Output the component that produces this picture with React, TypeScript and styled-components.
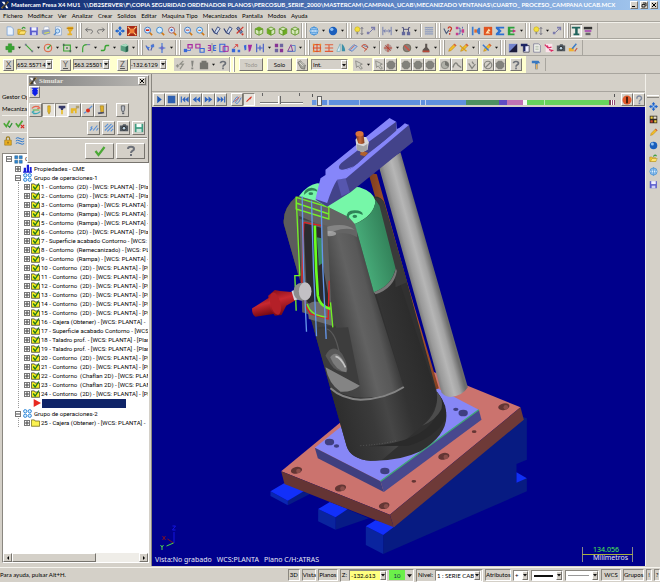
import React from 'react';
import styled, { createGlobalStyle, css } from 'styled-components';

const GlobalStyle = createGlobalStyle`
  * { box-sizing: border-box; }
  html, body, #root { margin: 0; height: 100%; }
  body { background: #d4d0c8; overflow: hidden; }
  body, button, input, select { font-family: Lato, Roboto, "Liberation Sans", sans-serif; font-size: 6px; color: #000; }
  button, input, select { margin: 0; padding: 0; border: 0; border-radius: 0; background: none; outline: 0; }
`;

const raised = css`
  border: 1px solid;
  border-color: #fff #77746e #77746e #fff;
`;
const sunken = css`
  border: 1px solid;
  border-color: #8a8780 #fff #fff #8a8780;
`;

/* ---------- icons, drawn on a 12 x 12 grid ---------- */

const stroke = (d: string, color: string, width = 1) => (
  <path d={d} fill="none" stroke={color} strokeWidth={width} />
);
const lens = (color: string, inner: React.ReactNode) => (
  <>
    <path d="M7.5 7.5 11 11" stroke="#d07818" strokeWidth="2" />
    <circle cx="5.5" cy="5" r="3.6" fill="#d5ecff" stroke={color} strokeWidth="1.2" />
    {inner}
  </>
);
const cube = (face: number) => (
  <>
    <path d="M1.5 3.5 6 1.2 10.5 3.5V8.800L6 11 1.500 8.800Z" fill="#d6e8bc" stroke="#5c9420" />
    {face === 0 && <path d="M1.500 3.500 6 1.200 10.500 3.500 6 5.500Z" fill="#6cab22" />}
    {face === 1 && <path d="M1.500 3.500 6 5.500V11L1.500 8.800Z" fill="#6cab22" />}
    {face === 2 && <path d="M10.500 3.500 6 5.500V11L10.500 8.800Z" fill="#6cab22" />}
    {stroke('M1.500 3.500 6 5.500 10.500 3.500M6 5.500V11', '#5c9420')}
  </>
);
const pencilShape = (
  <>
    <path d="M2 10 3 7 9 1 11 3 5 9Z" fill="#f2be28" stroke="#b07c10" strokeWidth=".6" />
    <path d="M9 1 11 3 10 4 8 2Z" fill="#d85048" />
  </>
);

const glyphs: Record<string, React.ReactNode> = {
  logo: (
    <>
      <path d="M1 1H5L8 6 11 11H8L5 6Z" fill="#fff" />
      <path d="M11 1 7 5M5 7 1 11" stroke="#e0b040" strokeWidth="2" />
      <path d="M8 1H11L5 11H1Z" fill="#222" opacity=".8" />
    </>
  ),
  page: <path d="M2.500 1H7.500L10 3.500V11H2.500Z" fill="#eaf4ff" stroke="#7da4d6" />,
  folder: (
    <>
      <path d="M1 4H4L5 5H9V10H1Z" fill="#f4c430" stroke="#a8871c" strokeWidth=".7" />
      <path d="M2 10 4 6H11L9 10Z" fill="#ffe36b" stroke="#a8871c" strokeWidth=".6" />
      {stroke('M6 3.500C7 1 9 1 10 3', '#3c9c3c', 1.5)}
    </>
  ),
  disk: (
    <>
      <path d="M1 1.500H10.500V11H1Z" fill="#5a5ccc" />
      <path d="M3 1.500H9V5.500H3Z" fill="#f3f3ff" />
      <path d="M3.500 7.500H8.500V11H3.500Z" fill="#cfd2f4" />
    </>
  ),
  printer: (
    <>
      <path d="M4 1H9L10 5H3Z" fill="#fff" stroke="#8899bb" strokeWidth=".6" />
      <path d="M1 5 9 4 11 6V9L4 11 1 9Z" fill="#8d9cc2" />
      <path d="M4 8 10 7V8L4 9.500Z" fill="#dce44c" />
    </>
  ),
  preview: (
    <>
      <path d="M3 1H8L10 3V11H3Z" fill="#f2f8ff" stroke="#7d9cc6" strokeWidth=".8" />
      <circle cx="5.500" cy="6" r="2.600" fill="#bfe0fa" stroke="#4c86c8" />
      {stroke('M4 8 1 11', '#4c86c8', 1.4)}
    </>
  ),
  cup: (
    <>
      <path d="M3 1H10L9 5 7 7V9H8.500V11H3V9H5V7L3.500 5Z" fill="#e8b028" />
      <path d="M2 2H10V3.500H2Z" fill="#c08410" />
    </>
  ),
  undo: stroke('M4.500 2 2 4.500 4.500 7M2 4.500H8C11 5 11 8 8 9', '#6c6c6c', 1.2),
  redo: stroke('M7.500 2 10 4.500 7.500 7M10 4.500H4C1 5 1 8 4 9', '#6c6c6c', 1.2),
  pan: (
    <>
      <path d="M6 0 8.500 3H7V5H9V3.500L12 6 9 8.500V7H7V9H8.500L6 12 3.500 9H5V7H3V8.500L0 6 3 3.500V5H5V3H3.500Z" fill="#1c62cc" />
      <circle cx="6" cy="6" r="1.300" fill="#9ccaff" />
    </>
  ),
  fit: (
    <>
      <path d="M0 0H12V12H0Z" fill="#a82a18" />
      <circle cx="6" cy="6" r="3" fill="#f08038" />
      {stroke('M1 1 4 4M11 1 8 4M1 11 4 8M11 11 8 8', '#ffd27a', 1.4)}
    </>
  ),
  zoomBox: lens('#4c80c8', <path d="M3.500 4H7.500V6H3.500Z" fill="#d82818" />),
  zoomPlain: lens('#4c90d0', null),
  zoomDot: lens('#b06060', <circle cx="5.500" cy="5" r="1.300" fill="#3c68d0" />),
  zoomOut: lens('#4c80c8', <path d="M3.500 4.300H7.500V5.600H3.500Z" fill="#c84838" />),
  zoomHalf: lens('#4c90d0', <path d="M4 4.500H7V6H4Z" fill="#e07030" />),
  pen: (
    <>
      {stroke('M1 3 4 8 8 10', '#2c3c74', 1.4)}
      <path d="M4 8 8 1 11 3 7 9Z" fill="#cfdcf0" stroke="#2c3c74" />
    </>
  ),
  penRed: (
    <>
      <path d="M2 3 7 9 9 7 4 1Z" fill="#7f8fb8" stroke="#2c3c74" />
      {stroke('M10 1 2 9', '#d03428', 1.4)}
      <circle cx="9" cy="10" r="1.300" fill="#d03428" />
    </>
  ),
  cubeTop: cube(0),
  cubeLeft: cube(1),
  cubeRight: cube(2),
  cubeWire: cube(3),
  globe: (
    <>
      <circle cx="6" cy="6" r="4.800" fill="#dcefff" stroke="#3c8cd4" />
      {stroke('M1.500 4H10.500M1.500 8H10.500M6 1V11M6 1C2.500 3 2.500 9 6 11M6 1C9.500 3 9.500 9 6 11', '#3c8cd4', 0.8)}
    </>
  ),
  sphere: (
    <>
      <circle cx="6" cy="6" r="5" fill="#1a5ebc" />
      <circle cx="4.500" cy="4" r="2" fill="#8cc0f4" />
    </>
  ),
  bulb: (
    <>
      <circle cx="4" cy="4" r="3" fill="#f4e03c" stroke="#c4a818" strokeWidth=".7" />
      <path d="M3 7H5V10H3Z" fill="#888" />
      {stroke('M9.500 2V10M8 3.500 9.500 1.500 11 3.500M8 8.500 9.500 10.500 11 8.500', '#667', 0.9)}
    </>
  ),
  nodes: (
    <>
      <path d="M6 1H11V5H9V3H6ZM1 7H4V10H1Z" fill="#7c7cac" />
      {stroke('M4 8 9 3', '#7c7cac', 1.2)}
    </>
  ),
  dimension: stroke('M1 1V11M11 1V11M2 6H10M4 4 2 6 4 8M8 4 10 6 8 8', '#5868a8', 0.9),
  layers: (
    <>
      <path d="M1 7H5V11H1ZM7 7H11V11H7Z" fill="#64689c" />
      {stroke('M3 7V2H1M9 7V2H11M3 4H9', '#3c4074', 1)}
    </>
  ),
  hatch: (
    <>
      {stroke('M1 2H11M1 4.500H11M1 7H11M1 9.500H11', '#8090b8', 1.2)}
      {stroke('M2 1V11M4.500 1V11M7 1V11M9.500 1V11', '#a4acc4', 0.7)}
    </>
  ),
  whatRed: (
    <>
      {stroke('M1 3 4 9 7 5', '#485878', 1.3)}
      {stroke('M6 3C7 0 11 1 10 4L8 7M8 8.500V10.500', '#c83828', 1.5)}
    </>
  ),
  tree: (
    <>
      <path d="M1 1H4V4H1ZM1 8H4V11H1ZM8 4H11V8H8Z" fill="#c83c8c" />
      {stroke('M4 2.500H6V9.500H4M6 6H8M9 1V3M9 9V11', '#4858b0', 1)}
    </>
  ),
  mirror: (
    <>
      <path d="M1 1H3V11H1ZM9 2 6 6 9 10H11V2Z" fill="#3c7cd0" />
      <path d="M4 4H7V8H4Z" fill="#e46c2c" />
    </>
  ),
  flame: (
    <>
      <path d="M1 1H11V11H1Z" fill="#e05420" />
      <path d="M3 9 7 3 9 6 6 7 9 9Z" fill="#ffe0b0" />
    </>
  ),
  sigma: <path d="M1 1H11V3H5L8 6 5 9H11V11H1V9L4 6 1 3Z" fill="#2c70d0" />,
  eBox: (
    <>
      <path d="M1 1H9V3H4V5H8V7H4V9H9V11H1Z" fill="#2ca03c" />
      <path d="M7 4 11 6 7 8Z" fill="#c03080" />
    </>
  ),
  column: <path d="M1 1H11V3H8V9H10V11H3V9H5V3H1Z" fill="#20645c" />,
  stack: (
    <>
      <path d="M1 1H11V4H1Z" fill="#333" />
      <path d="M2 5H10V7H2Z" fill="#a848b0" />
      <path d="M3 8H9V11H3Z" fill="#666" />
    </>
  ),
  plus: <path d="M4 1H8V4H11V8H8V11H4V8H1V4H4Z" fill="#38a432" stroke="#23801f" strokeWidth=".5" />,
  line: (
    <>
      {stroke('M2 2 10 10', '#38a432', 1.3)}
      <path d="M1 1H3V3H1ZM9 9H11V11H9Z" fill="#74748c" />
    </>
  ),
  circle: (
    <>
      <circle cx="6" cy="6" r="4.600" fill="none" stroke="#e0603c" strokeWidth="1.200" />
      {stroke('M6 6 9.500 2.500', '#38a432', 1.4)}
      <path d="M5 5H7V7H5Z" fill="#38a432" />
    </>
  ),
  rect: (
    <>
      {stroke('M2 2.500H10V9.500H2Z', '#38a432', 1.3)}
      <path d="M1 1H3V3.500H1ZM9 8.500H11V11H9ZM5 5H7V7H5Z" fill="#4a6c54" />
    </>
  ),
  fillet: (
    <>
      {stroke('M2 11V7Q2 2 7 2', '#38a432', 1.4)}
      {stroke('M7 2H11', '#5c5ca0', 1)}
    </>
  ),
  spline: stroke('M1 9H4Q6 9 6 6T8 3H11', '#38a432', 1.6),
  cylinder: (
    <>
      <path d="M2 3 8 1 11 3V10L8 11 2 9Z" fill="#58a080" />
      <path d="M8 3 11 3V10L8 11Z" fill="#2c6450" />
      <path d="M2 3 8 1 11 3 8 4.500Z" fill="#a8dcc0" />
    </>
  ),
  trim: (
    <>
      {stroke('M1 3 5 9M10 1 7 9', '#5058a8', 1.3)}
      <path d="M1 4 6 5 3 8ZM7 2H11V5H7Z" fill="#4878d8" />
    </>
  ),
  breakIcon: (
    <>
      {stroke('M6 0V12M2 6H10', '#4878d8', 1.4)}
      <circle cx="6" cy="6" r="2" fill="#6868c8" />
    </>
  ),
  xform1: (
    <>
      {stroke('M6 2H11V6H6Z', '#a828a0', 1.4)}
      <path d="M1 7H5V11H1Z" fill="#3868d8" />
      {stroke('M5 9H9V7', '#3868d8', 1)}
    </>
  ),
  xform2: (
    <>
      {stroke('M1 1.500H6V6H1Z', '#a828a0', 1.3)}
      {stroke('M6 6.500H11V11H6Z', '#3868d8', 1.3)}
    </>
  ),
  xform3: (
    <>
      {stroke('M6 0V12', '#777', 0.8)}
      {stroke('M1 3H4V9H1M4 6H1', '#a828a0', 1.4)}
      {stroke('M11 3H8V9H11M8 6H11', '#3868d8', 1.4)}
    </>
  ),
  xform4: (
    <>
      {stroke('M1 1.500H7V10.500H1Z', '#3868d8', 1.3)}
      {stroke('M5 4H11V10H5Z', '#a828a0', 1.2)}
    </>
  ),
  xform5: (
    <>
      <path d="M1 7H5V11H1ZM8 8H11V11H8Z" fill="#3868d8" />
      {stroke('M3 6 8 2M8 2V5M8 2H5', '#d84848', 1.2)}
    </>
  ),
  xform6: (
    <>
      <path d="M1 3 4 2V8L2 9Z" fill="#3868d8" />
      <path d="M6 2H11L9 9 7 11Z" fill="#a828a0" />
    </>
  ),
  align: stroke('M2 1V11M10 1V11M3 6H9M6 3V9', '#4860c8', 1.4),
  four: (
    <>
      <path d="M1 1H5V5H1ZM7 7H11V11H7Z" fill="#883494" />
      <path d="M7 1H11V5H7ZM1 7H5V11H1Z" fill="#6c64a0" />
    </>
  ),
  triangle: (
    <>
      {stroke('M2 10 6 2 8 10Z', '#883494', 1.1)}
      {stroke('M7 3H11V10H2', '#4878c8', 1)}
    </>
  ),
  gridRed: (
    <>
      {stroke('M2 2H10V10H2ZM6 1V11M1 6H11', '#e04820', 1.2)}
      <path d="M1 1H3V3H1ZM9 1H11V3H9ZM1 9H3V11H1ZM9 9H11V11H9Z" fill="#f09028" />
    </>
  ),
  lines: stroke('M1 2H11M1 6H11M1 10H11M6 2V10', '#e05c38', 1.3),
  sail: (
    <>
      <path d="M5 1V10H1Z" fill="#e4f4ff" stroke="#68a8b8" strokeWidth=".8" />
      <path d="M7 1Q11 4 11 10H7Z" fill="#3c90a8" />
    </>
  ),
  roll: (
    <>
      <path d="M1 8 7 2 11 4 5 10Z" fill="#a8c8f0" stroke="#5c78b8" />
      {stroke('M3 8 8 3', '#e06840', 1.2)}
    </>
  ),
  loop: (
    <>
      {stroke('M2 4C4 0 10 2 9 6L5 10M2 4 8 8', '#c84830', 1.2)}
      {stroke('M4 3 10 5', '#70789c', 1.2)}
    </>
  ),
  star: (
    <>
      <circle cx="6" cy="6" r="4.500" fill="#b49c98" />
      {stroke('M6 1V11M1 6H11M3 3 9 9', '#b83828', 1)}
    </>
  ),
  noGo: (
    <>
      <circle cx="6" cy="6" r="4.600" fill="#8c7c78" stroke="#665" />
      {stroke('M3 3 9 9', '#d85040', 1.6)}
    </>
  ),
  stamp: (
    <>
      <path d="M5 1H7.500V5L10 8V11H2V8L5 5Z" fill="#5c5450" />
      <path d="M2 9H10V11H2Z" fill="#b84838" />
    </>
  ),
  pencil: pencilShape,
  pencils: (
    <>
      {pencilShape}
      {stroke('M1 3 9 10', '#d8a020', 1.6)}
    </>
  ),
  pencilBlue: (
    <>
      {pencilShape}
      {stroke('M1 2 8 9', '#3c78d0', 1.8)}
    </>
  ),
  halfTone: (
    <>
      <path d="M1 1H11V11H1Z" fill="#7484cc" />
      <path d="M11 1V11H1Z" fill="#1c1c3c" />
    </>
  ),
  tee: (
    <>
      <path d="M4 3H11V11H4Z" fill="#eef" stroke="#445" />
      <path d="M1 1H9V4H6.500V10H4V4H1Z" fill="#1c2464" />
    </>
  ),
  doc: (
    <>
      <path d="M2 1H8L10 3V11H2Z" fill="#f4f4ec" stroke="#668" strokeWidth=".8" />
      {stroke('M4 4H8M4 6H8M4 8H8', '#8c9c8c', 0.7)}
    </>
  ),
  docRed: (
    <>
      <path d="M2 1H10V11H2Z" fill="#fce4ec" />
      {stroke('M1 2 5 6 4 3M5 6 9 5M6 8 10 9 8 10', '#d82860', 1.5)}
    </>
  ),
  camera: (
    <>
      <path d="M1 3H4L5 1.500H8L9 3H11V10H1Z" fill="#505860" />
      <circle cx="6" cy="6.300" r="2.200" fill="#bcd4e4" stroke="#222" />
    </>
  ),
  brush: (
    <>
      <path d="M1 6H7V10H1Z" fill="#f0b030" />
      {stroke('M10 1 5 7', '#3c7cc8', 1.8)}
      {stroke('M8 10 11 6', '#c85840', 1.4)}
    </>
  ),
  flash: stroke('M1 7H5M3 5V9M10 1 6 5H10L6 11', '#909088', 1.5),
  bang: <path d="M5 1H8L7 8H5.800ZM5.200 9H7.500V11H5.200Z" fill="#85857f" />,
  block: <path d="M1 3H3V1H9V3H11V11H1Z" fill="#74746e" />,
  help: (
    <>
      {stroke('M3 4C3 1 9 1 9 4 9 6 6 5.500 6 8', '#6c7078', 2)}
      <path d="M5 9H7V11H5Z" fill="#6c7078" />
    </>
  ),
  hand: (
    <>
      <path d="M1 3 4 1 10 6 9 11 5 10Z" fill="#a4a49c" stroke="#74746e" />
      {stroke('M3 3 7 7M5 2 9 6', '#e8e8e0', 1)}
    </>
  ),
  pointer: <path d="M2 1 10 5 7 6 10 10 8 11 5 7 3 9Z" fill="#d0d0c8" stroke="#85857f" />,
  dot: <path d="M4 1H8L11 4V8L8 11H4L1 8V4Z" fill="#82827c" />,
  arcs: (
    <>
      <circle cx="6" cy="6" r="4.500" fill="#b0b0a8" stroke="#85857f" />
      <path d="M6 6V1.500A4.500 4.500 0 0 1 10 8Z" fill="#74746e" />
    </>
  ),
  hill: stroke('M1 9Q4 0 7 6L11 9', '#85857f', 1.7),
  check: stroke('M2 4 6 10 10 5M6 2 8 5', '#85857f', 1.5),
  forbid: (
    <>
      <circle cx="6" cy="6" r="4.500" fill="none" stroke="#85857f" strokeWidth="1.400" />
      {stroke('M9 3 3 9', '#85857f', 1.4)}
    </>
  ),
  hammer: (
    <>
      <path d="M1 1H9L11 4H8V11H5V4H1Z" fill="#3878c0" />
      <path d="M5.500 5H8V11H5.500Z" fill="#e0b060" />
    </>
  ),
  palette: (
    <>
      <path d="M1 1H11V11H1Z" fill="#302820" />
      <path d="M2 2H5V5H2ZM7 7H10V10H7Z" fill="#f0d040" />
      <path d="M6 2H10V5H6Z" fill="#e8e0d0" />
      <path d="M2 7H5V10H2Z" fill="#d04030" />
    </>
  ),
  tick: stroke('M1.500 6 4.500 10 10.500 2', '#4ba836', 2.2),
  tickAdd: (
    <>
      {stroke('M1 5 4 9 8 2', '#4ba836', 2)}
      {stroke('M6 8 8 10 11 5', '#2c8c38', 1.5)}
    </>
  ),
  tickDel: (
    <>
      {stroke('M1 5 4 9 9 2', '#4ba836', 2)}
      {stroke('M7 7 11 11M11 7 7 11', '#d82820', 1.4)}
    </>
  ),
  lock: (
    <>
      {stroke('M4 5V3Q4 1 6 1T8 3V5', '#9c7c18', 1.3)}
      <path d="M2 5H10V11H2Z" fill="#e8ac20" stroke="#9c7818" strokeWidth=".7" />
      <path d="M5.500 7H6.500V9H5.500Z" fill="#5c4408" />
    </>
  ),
  waves: stroke('M1 3Q3 1 6 3T11 3M1 6Q3 4 6 6T11 6M1 9Q3 7 6 9T11 9', '#2c78d0', 1.2),
  chevrons: <path d="M2 1H10V2H8L10 5H2L4 2H2ZM2 5H10L8 6 10 7 6 11 2 7 4 6Z" fill="#0a1ce8" />,
  rotate: (
    <>
      {stroke('M1 4Q5 0 10 3M8 1 10.500 3.500 7.500 4.500', '#e86850', 1.4)}
      {stroke('M11 8Q7 12 2 9M4 7 1.500 8.500 4 11', '#38a8b8', 1.4)}
      {stroke('M2 6H10', '#58b848', 1.2)}
    </>
  ),
  tool: <path d="M4.500 1H7.500V8L6 11 4.500 8Z" fill="#e8bc28" stroke="#a07c10" strokeWidth=".6" />,
  holder: (
    <>
      <path d="M2 1H10V4H8L7 6H5L4 4H2Z" fill="#343868" />
      <path d="M5 6H7V11H5Z" fill="#e8bc28" />
    </>
  ),
  key: (
    <>
      <path d="M1 4H8V10H6V7H4V10H1Z" fill="#e8b828" />
      <path d="M7 1H11V4H9L7 5Z" fill="#b0a070" />
    </>
  ),
  probe: (
    <>
      {stroke('M11 1 6 6M4 8 1 10', '#5890d8', 1.4)}
      <circle cx="6" cy="6.500" r="2.400" fill="#d83020" />
    </>
  ),
  bucket: (
    <>
      <path d="M5 1H9V9L6 10Z" fill="#e0b028" stroke="#907010" strokeWidth=".6" />
      <path d="M2 9 9 8 10 10 3 11Z" fill="#4c5068" />
    </>
  ),
  screw: (
    <>
      <path d="M4 1H8V5L7 8H5L4 5Z" fill="#b8bcc4" stroke="#44484f" strokeWidth=".9" />
      <path d="M5 9H7.500V11H5Z" fill="#5c6068" />
    </>
  ),
  slash2: stroke('M1 9 4 6M5 9 10 3M2 6 4 4M9 9 11 6', '#5890d8', 1.3),
  slash3: stroke('M1 5 5 1M1 9 9 1M4 10 11 3M8 10 11 7', '#5890d8', 1.3),
  diskGreen: (
    <>
      <path d="M1 1H11V11H1Z" fill="#3c9c80" />
      <path d="M3 1H9V5H3Z" fill="#f4fffa" />
      <path d="M3 7H9V11H3Z" fill="#cce4dc" />
    </>
  ),
  play: <path d="M3 1 9 6 3 11Z" fill="#1d56b4" />,
  stop: <path d="M1 1H11V11H1Z" fill="#2f60b0" />,
  first: <path d="M1 2H2.500V10H1ZM7 2V10L3 6ZM11.500 2V10L7 6Z" fill="#2f64c0" />,
  back: <path d="M6 2V10L1 6ZM11 2V10L6 6Z" fill="#2f64c0" />,
  next: <path d="M1 2V10L6 6ZM6 2V10L11 6Z" fill="#2f64c0" />,
  last: <path d="M.500 2V10L5 6ZM5 2V10L9 6ZM9.500 2H11V10H9.500Z" fill="#2f64c0" />,
  trace: (
    <>
      {stroke('M1 9 5 3Q7 1 8 4L4 9Q6 12 9 7L11 3', '#5c88d0', 1.2)}
      {stroke('M3 8 9 2', '#d85040', 1)}
    </>
  ),
  traceRed: stroke('M3 8 8 3M7 5 9 2', '#d83828', 1.3),
  stopSign: (
    <>
      <circle cx="6" cy="6" r="5.400" fill="#e25a2c" />
      <path d="M5 2H7V10H5Z" fill="#301408" />
    </>
  ),
  helpKey: (
    <>
      {stroke('M3.500 4.500C3 0 9 0 9 4 9 6 6.500 6 6.500 8', '#7c88a0', 1.8)}
      <path d="M5.500 9H7.500V11H5.500Z" fill="#7c88a0" />
    </>
  ),
  machine: <path d="M1 1H5V5H1ZM7 1H11V5H7ZM1 7H5V11H1ZM7 7H11V11H7Z" fill="#2e86d8" stroke="#145" strokeWidth=".5" />,
  props: <path d="M1 5H4V10H1ZM5 1H8V10H5ZM9 4H11.500V10H9ZM0 10H12V11.500H0Z" fill="#1a20d8" />,
  group: (
    <g fill="#d8f0ff" stroke="#2e86d8" strokeWidth="1.300">
      <circle cx="3" cy="3" r="2.200" />
      <circle cx="9" cy="3" r="2.200" />
      <circle cx="3" cy="9" r="2.200" />
      <circle cx="9" cy="9" r="2.200" />
    </g>
  ),
  op: (
    <>
      <path d="M.500 2.500H4.500L5.500 4H11.500V11H.500Z" fill="#f4ee20" stroke="#333" />
      {stroke('M3 6 5.500 9.500 10.500 2', '#1c7818', 1.8)}
    </>
  ),
  opEmpty: <path d="M.500 2.500H4.500L5.500 4H11.500V11H.500Z" fill="#fbf250" stroke="#6c6418" />,
  insert: <path d="M1 0 12 6 1 12Z" fill="#e82820" />,
};

const Svg = styled.svg<{ $size: number }>`
  display: block;
  flex: none;
  width: ${(p) => p.$size}px;
  height: ${(p) => p.$size}px;
`;
const Icon = ({ name, size = 10 }: { name: string; size?: number }) => (
  <Svg $size={size} viewBox="0 0 12 12" aria-hidden="true">
    {glyphs[name]}
  </Svg>
);
const Caret = ({ size = 4 }: { size?: number }) => (
  <Svg $size={size} viewBox="0 0 8 8" aria-hidden="true">
    <path d="M0 2H8L4 7Z" fill="#111" />
  </Svg>
);

/* ---------- frame ---------- */

const Window = styled.div`
  display: flex;
  flex-direction: column;
  min-height: 100vh;
  background: #d4d0c8;
  line-height: 8px;
  white-space: pre;
`;
const TitleBar = styled.header`
  display: flex;
  align-items: center;
  gap: 2px;
  height: 10px;
  padding: 0 2px 0 1px;
  background: linear-gradient(90deg, #0a246a, #5d85c6 60%, #a6caf0);
`;
const Title = styled.h1`
  flex: 1;
  min-width: 0;
  margin: 0;
  overflow: hidden;
  color: #fff;
  font: bold 6px/10px Lato, "Open Sans", sans-serif;
`;
const WinButton = styled.button`
  ${raised}
  display: grid;
  place-items: center;
  width: 8px;
  height: 8px;
  background: #d4d0c8;
`;
const MenuBar = styled.nav`
  display: flex;
  align-items: center;
  gap: 5px;
  height: 12px;
  padding-left: 3px;
  border-bottom: 1px solid #a8a59e;
`;
const MenuItem = styled.button`
  line-height: 8px;
`;

/* ---------- toolbars ---------- */

const ToolRow = styled.div`
  display: flex;
  height: 17px;
  border-bottom: 1px solid #a8a59e;
  border-top: 1px solid #f2f0ea;
`;
const ToolGroup = styled.div`
  display: flex;
  align-items: center;
  padding: 0 3px 0 4px;
  border-right: 1px solid #a8a59e;
`;
const ToolButton = styled.button<{ $active?: boolean }>`
  display: grid;
  place-items: center;
  width: 12px;
  height: 13px;
  ${(p) => p.$active && css`box-shadow: inset 1px 1px #8a8780, inset -1px -1px #fff; background: #eae8e2;`}
`;
const DropButton = styled.button`
  display: grid;
  place-items: center;
  width: 7px;
  height: 13px;
`;
const Divider = styled.span`
  width: 4px;
  height: 13px;
  background: linear-gradient(90deg, transparent 1px, #a09d96 1px 2px, #fff 2px 3px, transparent 3px);
`;
const Grip = styled.span`
  width: 7px;
  height: 15px;
  background: linear-gradient(90deg, #a8a59e 1px, #fff 1px 2px, transparent 2px 4px, #fff 4px 5px, #a09d96 5px 6px, transparent 6px);
`;

const Tools = ({ spec, active }: { spec: string; active?: string }) => (
  <>
    {spec.split(' ').map((t, i) => {
      if (t === '|') return <Divider key={i} />;
      if (t === ':') return <Grip key={i} />;
      if (t === 'v') return <DropButton key={i} aria-label="Más opciones"><Caret size={3} /></DropButton>;
      return (
        <ToolButton key={i} aria-label={t} $active={t === active}>
          <Icon name={t} size={10} />
        </ToolButton>
      );
    })}
  </>
);

const fileTools =
  'page folder disk printer preview cup : undo redo : pan fit | zoomBox zoomPlain zoomDot | zoomOut zoomHalf | pen pen penRed : cubeTop cubeLeft cubeRight cubeWire : globe v sphere v : bulb nodes | dimension v layers v | hatch : whatRed tree | mirror flame sigma eBox v : bulb v nodes : column stack';
const sketchTools =
  'plus v line v circle v rect v fillet v spline v cylinder v : trim breakIcon v : xform1 xform2 xform3 xform4 xform5 xform6 align v four triangle v : gridRed lines sail roll loop v | star v noGo v stamp v : pencil pencils v | pencilBlue v : halfTone tee doc docRed camera brush';

const Ribbon = styled.div`
  display: flex;
  align-items: center;
  height: 18px;
  border-bottom: 1px solid #a8a59e;
`;
const RibbonBody = styled.div`
  display: flex;
  align-items: center;
  height: 17px;
  padding: 0 4px 0 3px;
  background: #ffffcf;
`;
const AxisField = styled.div`
  display: flex;
  gap: 2px;
  margin-right: 7px;
`;
const AxisButton = styled.button`
  ${raised}
  width: 11px;
  height: 12px;
  background: #d4d0c8;
  font-size: 8px;
  line-height: 9px;
  color: #555;
  text-decoration: underline;
`;
const Combo = styled.div<{ $w: number; $bg?: string; $tight?: boolean }>`
  ${sunken}
  display: flex;
  align-items: center;
  width: ${(p) => p.$w}px;
  height: 11px;
  padding-left: ${(p) => (p.$tight ? 0 : 1)}px;
  background: ${(p) => p.$bg || '#d4d0c8'};
  & > input, & > select { flex: 1; min-width: 0; width: 0; height: 9px; appearance: none; }
`;
const Numeric = styled.input`
  font-family: Roboto, sans-serif;
`;
const ComboArrow = styled.span`
  ${raised}
  display: grid;
  place-items: center;
  flex: none;
  width: 6px;
  height: 9px;
  background: #d4d0c8;
`;
const Flat = styled.div`
  display: flex;
  align-items: center;
  height: 13px;
  background: #d4d0c8;
`;
const PushButton = styled.button<{ $w: number; $dim?: boolean }>`
  ${raised}
  width: ${(p) => p.$w}px;
  height: 13px;
  margin-right: 4px;
  background: #d4d0c8;
  color: ${(p) => (p.$dim ? '#99968f' : '#111')};
  line-height: 9px;
`;
const IconButton = styled.button<{ $w?: number; $h?: number; $pressed?: boolean }>`
  ${(p) => (p.$pressed ? sunken : raised)}
  display: grid;
  place-items: center;
  flex: none;
  width: ${(p) => p.$w || 12}px;
  height: ${(p) => p.$h || 13}px;
  background: ${(p) => (p.$pressed ? '#e6e3dc' : '#d4d0c8')};
`;
const Space = styled.span<{ $w: number }>`
  flex: none;
  width: ${(p) => p.$w}px;
`;

/* ---------- work area ---------- */

const Work = styled.main`
  position: relative;
  flex: 1;
  display: grid;
  grid-template-columns: 152px minmax(0, 1fr) 15px;
  min-height: 0;
  padding-bottom: 1px;
`;
const Manager = styled.aside`
  display: flex;
  flex-direction: column;
  min-height: 0;
  padding: 17px 2px 3px 2px;
  border-right: 1px solid #8a8780;
`;
const ManagerLabel = styled.div`
  height: 12px;
  line-height: 12px;
`;
const ManagerTools = styled.div`
  display: flex;
  align-items: center;
  height: 17px;
  border-top: 1px solid #f2f0ea;
`;
const TreeBox = styled.div`
  ${sunken}
  flex: 1;
  display: flex;
  flex-direction: column;
  min-height: 0;
  margin-top: 4px;
  overflow: hidden;
  background: #fff;
  font-family: Roboto, "Liberation Sans", sans-serif;
`;
const TreeList = styled.ul`
  flex: 1;
  margin: 0;
  padding: 0;
  overflow: hidden;
  list-style: none;
`;
const Branch = styled.ul`
  margin: 0 0 1px 15px;
  padding: 0 0 0 5px;
  list-style: none;
  border-left: 1px dotted #999;
`;
const Row = styled.div<{ $level: number }>`
  display: flex;
  align-items: center;
  gap: ${(p) => (p.$level === 2 ? 1 : 2)}px;
  height: ${(p) => (p.$level === 0 ? 10 : 9)}px;
  padding-left: ${(p) => [3, 12, 0][p.$level]}px;
`;
const Toggle = styled.button`
  display: grid;
  place-items: center;
  flex: none;
  width: 6px;
  height: 6px;
  border: 1px solid #777;
  background: #fff;
`;
const Cursor = styled.div`
  display: flex;
  align-items: center;
  gap: 1px;
  height: 10px;
  padding-left: 9px;
`;
const Selection = styled.span`
  width: 84px;
  height: 9px;
  background: #0f2468;
`;
const ScrollBar = styled.div`
  display: flex;
  height: 9px;
  background: #efede8;
`;
const ScrollButton = styled.button`
  ${raised}
  display: grid;
  place-items: center;
  width: 9px;
  background: #d4d0c8;
`;
const Thumb = styled.div`
  ${raised}
  width: 84px;
  margin-right: auto;
  background: #d4d0c8;
`;

const Stage = styled.section`
  display: flex;
  flex-direction: column;
  min-width: 0;
`;
const StageTop = styled.div`
  height: 18px;
  border-bottom: 1px solid #a8a59e;
`;
const PlayBar = styled.div`
  display: flex;
  align-items: center;
  height: 15px;
  padding-left: 1px;
`;
const Speed = styled.input`
  appearance: none;
  width: 43px;
  height: 13px;
  margin: 0 9px 0 5px;
  background:
    linear-gradient(#666, #666) 2px 0 / 1px 3px no-repeat,
    linear-gradient(#666, #666) 39px 0 / 1px 3px no-repeat,
    linear-gradient(#777 1px, #fff 1px) 0 9px / 100% 2px no-repeat;
  &::-webkit-slider-thumb {
    appearance: none;
    width: 3px;
    height: 8px;
    background: #d4d0c8;
    border-right: 1px solid #666;
    border-left: 1px solid #fff;
  }
`;
const Timeline = styled.div`
  position: relative;
  flex: 1;
  display: flex;
  align-items: flex-end;
  height: 12px;
  padding-bottom: 1px;
  background: linear-gradient(#555, #555) 0 0 / 1px 3px no-repeat, linear-gradient(#555, #555) 100% 0 / 1px 3px no-repeat;
`;
const Segment = styled.span<{ $grow: number; $color: string }>`
  flex: ${(p) => p.$grow} 1 0;
  height: 5px;
  background: ${(p) => p.$color};
`;
const Playhead = styled.span`
  position: absolute;
  left: 5px;
  top: 2px;
  width: 5px;
  height: 10px;
  border: 1px solid #666;
  background: #f4f2ec;
`;
const Viewport = styled.div`
  position: relative;
  flex: 1;
  min-height: 0;
  overflow: hidden;
  background: #00008c;
`;
const Scene = styled.svg`
  position: absolute;
  inset: 0;
  width: 100%;
  height: 100%;
`;
const ViewText = styled.p`
  position: absolute;
  left: 3px;
  bottom: 2px;
  display: flex;
  gap: 5px;
  margin: 0;
  color: #e6e8f4;
  font: 7px/9px "Noto Sans", "Open Sans", sans-serif;
`;
const Scale = styled.div`
  position: absolute;
  right: 12px;
  bottom: 4px;
  width: 51px;
  padding-left: 11px;
  color: #e6e8f4;
  font: 7px/8px "Noto Sans", "Open Sans", sans-serif;
  background:
    linear-gradient(#a8b040, #a8b040) 0 7px / 100% 1px no-repeat,
    linear-gradient(#888, #888) 0 0 / 1px 100% no-repeat,
    linear-gradient(#888, #888) 100% 0 / 1px 100% no-repeat;
`;
const ScaleValue = styled.div`
  height: 7px;
  color: #4ff04c;
  line-height: 6px;
`;
const SideBar = styled.aside`
  display: flex;
  flex-direction: column;
  align-items: center;
  padding-top: 21px;
  border-left: 1px solid #f2f0ea;
`;
const SideGrip = styled.span`
  width: 12px;
  height: 3px;
  margin-bottom: 2px;
  border-top: 1px solid #fff;
  border-bottom: 1px solid #8a8780;
`;

/* ---------- simulation dialog ---------- */

const Dialog = styled.section`
  ${raised}
  position: absolute;
  left: 27px;
  top: 1px;
  width: 122px;
  padding: 0 1px 3px;
  background: #d4d0c8;
`;
const DialogTitle = styled.header`
  display: flex;
  align-items: center;
  gap: 2px;
  height: 10px;
  padding-right: 1px;
  background: linear-gradient(90deg, #808080, #b8b6b2);
`;
const DialogName = styled.h2`
  flex: 1;
  margin: 0;
  color: #e4e2dc;
  font: bold 7px/10px "Liberation Serif", serif;
`;
const DialogRow = styled.div<{ $top: number; $end?: boolean }>`
  display: flex;
  justify-content: ${(p) => (p.$end ? 'flex-end' : 'flex-start')};
  gap: ${(p) => (p.$end ? 2 : 0)}px;
  padding-right: ${(p) => (p.$end ? 2 : 0)}px;
  margin-top: ${(p) => p.$top}px;
`;
const Rule = styled.hr`
  margin: 2px 0 0;
  border: 0;
  border-top: 1px solid #8a8780;
  border-bottom: 1px solid #fff;
`;

/* ---------- status bar ---------- */

const StatusBar = styled.footer`
  display: flex;
  align-items: center;
  gap: 2px;
  height: 15px;
  border-top: 1px solid #f6f4ee;
`;
const Hint = styled.span`
  flex: 1;
`;
const StatusButton = styled.button<{ $w: number }>`
  ${sunken}
  width: ${(p) => p.$w}px;
  height: 12px;
  white-space: nowrap;
  line-height: 8px;
  overflow: visible;
`;
const Pane = styled.div`
  ${sunken}
  display: flex;
  align-items: center;
  gap: 2px;
  height: 13px;
  padding: 0 1px;
`;
const ColorBox = styled.button`
  width: 16px;
  height: 10px;
  background: #6bf04a;
  color: #134;
`;
const LineSample = styled.span<{ $h: number }>`
  position: absolute;
  left: 2px;
  right: 9px;
  top: 4px;
  height: ${(p) => p.$h}px;
  background: ${(p) => (p.$h > 1 ? '#111' : '#999')};
  pointer-events: none;
`;
const LineCombo = styled(Combo)`
  position: relative;
`;

/* ---------- data ---------- */

const P = '[WCS: PLANTA]';
const operations = [
  `1 - Contorno  (2D) - ${P} - [Pla`,
  `2 - Contorno  (2D) - ${P} - [Pla`,
  `3 - Contorno  (Rampa) - ${P} -`,
  `4 - Contorno  (Rampa) - ${P} -`,
  `5 - Contorno  (Rampa) - ${P} -`,
  `6 - Contorno  (2D) - ${P} - [Pla`,
  '7 - Superficie acabado Contorno - [WCS: P',
  '8 - Contorno  (Remecanizado) - [WCS: PL',
  `9 - Contorno  (Rampa) - ${P} -`,
  ...[10, 11, 12, 13, 14, 15].map((n) => `${n} - Contorno  (2D) - ${P} - [Pl`),
  `16 - Cajera (Obtener) - ${P} -`,
  '17 - Superficie acabado Contorno - [WCS:',
  `18 - Taladro prof. - ${P} - [Plan`,
  `19 - Taladro prof. - ${P} - [Plan`,
  `20 - Contorno  (2D) - ${P} - [Pl`,
  `21 - Contorno  (2D) - ${P} - [Pl`,
  '22 - Contorno  (Chaflan 2D) - [WCS: PLAN',
  '23 - Contorno  (Chaflan 2D) - [WCS: PLAN',
  `24 - Contorno  (2D) - ${P} - [Pl`,
];

const segments: [number, string][] = [
  [4, '#6a98e0'], [2, '#9cc0f0'], [9, '#5f90de'], [2, '#b4ccf0'], [30, '#5f90de'], [1, '#a8c4ee'],
  [60, '#5f90de'], [1, '#c0d4f4'], [4, '#5f90de'], [1, '#c0d4f4'], [40, '#5f90de'], [32, '#4d9060'],
  [8, '#5f4cc4'], [16, '#c072b4'], [4, '#f4faf4'], [17, '#66d45c'], [1, '#b8ecb4'], [64, '#66d45c'],
  [2, '#7c4458'], [1, '#fff'], [1, '#944c78'], [1, '#fff'], [1, '#944c78'],
];

const TreeToggle = ({ open }: { open?: boolean }) => (
  <Toggle aria-label={open ? 'Contraer' : 'Expandir'}>
    <Svg $size={4} viewBox="0 0 4 4">
      <path d={open ? 'M0 1.500H4V2.500H0Z' : 'M0 1.500H4V2.500H0ZM1.500 0H2.500V4H1.500Z'} fill="#444" />
    </Svg>
  </Toggle>
);

const Model = () => (
  <Scene viewBox="152 108 492 459" preserveAspectRatio="xMidYMid meet" role="img" aria-label="Pieza con utillaje">
    <defs>
      <linearGradient id="pillar" gradientUnits="userSpaceOnUse" x1="538" y1="556" x2="608" y2="537">
        <stop offset="0" stopColor="#808080" />
        <stop offset=".15" stopColor="#9a9a9a" />
        <stop offset=".5" stopColor="#b6b6b6" />
        <stop offset=".75" stopColor="#a2a2a2" />
        <stop offset="1" stopColor="#6c6c6c" />
      </linearGradient>
      <linearGradient id="front" gradientUnits="userSpaceOnUse" x1="225" y1="640" x2="440" y2="585">
        <stop offset="0" stopColor="#3e3e3e" />
        <stop offset=".4" stopColor="#464646" />
        <stop offset=".65" stopColor="#626262" />
        <stop offset=".85" stopColor="#585858" />
        <stop offset="1" stopColor="#3a3a3a" />
      </linearGradient>
      <linearGradient id="drum" gradientUnits="userSpaceOnUse" x1="300" y1="945" x2="610" y2="865">
        <stop offset="0" stopColor="#2c2c2c" />
        <stop offset=".35" stopColor="#3a3a3a" />
        <stop offset=".5" stopColor="#464646" />
        <stop offset=".7" stopColor="#333" />
        <stop offset="1" stopColor="#2a2a2a" />
      </linearGradient>
      <linearGradient id="greenSide" gradientUnits="userSpaceOnUse" x1="370" y1="440" x2="460" y2="415">
        <stop offset="0" stopColor="#49b07c" />
        <stop offset=".5" stopColor="#3f9a6c" />
        <stop offset="1" stopColor="#34855c" />
      </linearGradient>
      <linearGradient id="rod" x1="0" x2="1">
        <stop offset="0" stopColor="#7c3c1c" />
        <stop offset=".5" stopColor="#c4693a" />
        <stop offset="1" stopColor="#844020" />
      </linearGradient>
      <linearGradient id="redTool" x1="0" y1="0" x2="0.3" y2="1">
        <stop offset="0" stopColor="#7c0c18" />
        <stop offset=".45" stopColor="#c82830" />
        <stop offset="1" stopColor="#780a14" />
      </linearGradient>
    </defs>

    {/* fixture base and plates */}
    <g transform="translate(260 330) scale(.33333)">
      <path d="M368 618 400 590 780 262 799 268V392L768 405V460L799 447V487L368 675Z" fill="#071b82" />
      <path d="M768 430 799 448 768 461Z" fill="#1030f4" />
      <path d="M316 592 368 618V675L316 648Z" fill="#0a249e" />
      <path d="M316 592 345 574 405 590 368 618Z" fill="#1230fa" />
      <path d="M225 565 258 540 325 568 225 602Z" fill="#071b86" />
      <path d="M173 540 225 565V602L173 577Z" fill="#0a249e" />
      <path d="M173 540 208 519 262 540 225 565Z" fill="#1230fa" />
      <path d="M82 515 118 488 154 492 82 529Z" fill="#071b86" />
      <path d="M30 487 82 515V529L30 501Z" fill="#0a26b0" />
      <path d="M30 487 72 462 132 485 82 515Z" fill="#1230fa" />

      <path d="M62 427 455 103 520 129 780 235 388 557Z" fill="#cb736e" />
      <path d="M62 427 388 557 400 595 72 465Z" fill="#643434" />
      <path d="M388 557 780 235 790 272 400 595Z" fill="#6e3a38" />
      <g fill="#643634">
        <ellipse cx="108" cy="424" rx="17" ry="10" transform="rotate(-12 108 424)" />
        <ellipse cx="240" cy="477" rx="17" ry="10" transform="rotate(-12 240 477)" />
        <ellipse cx="371" cy="530" rx="16" ry="10" transform="rotate(-12 371 530)" />
        <ellipse cx="550" cy="382" rx="17" ry="10" transform="rotate(-12 550 382)" />
        <ellipse cx="730" cy="233" rx="17" ry="10" transform="rotate(-12 730 233)" />
        <ellipse cx="460" cy="457" rx="7" ry="4" />
        <ellipse cx="641" cy="308" rx="7" ry="4" />
      </g>
      <g fill="#8c4e4a">
        <ellipse cx="114" cy="426" rx="7" ry="7" />
        <ellipse cx="246" cy="479" rx="7" ry="7" />
        <ellipse cx="377" cy="532" rx="7" ry="7" />
        <ellipse cx="556" cy="384" rx="7" ry="7" />
        <ellipse cx="736" cy="235" rx="7" ry="7" />
      </g>

      <path d="M163 356 440 133 535 180 655 242 360 457Z" fill="#8787f6" />
      <path d="M163 356 360 457 370 489 172 388Z" fill="#3f3f7e" />
      <path d="M360 457 655 242 663 272 370 489Z" fill="#48488e" />
      <path d="M360 457 655 242" stroke="#3ea878" strokeWidth="4" />
      <g fill="#3f3f80">
        <ellipse cx="207" cy="339" rx="14" ry="10" />
        <ellipse cx="228" cy="351" rx="8" ry="5" />
        <ellipse cx="373" cy="426" rx="14" ry="10" />
        <ellipse cx="608" cy="252" rx="14" ry="10" />
        <ellipse cx="586" cy="241" rx="8" ry="5" />
      </g>
    </g>

    {/* pillar, rod, workpiece, clamp */}
    <g transform="translate(235 110) scale(.33333)">
      <path d="M430 172 495 130 697 835Q680 862 645 864 625 862 618 850Z" fill="url(#pillar)" />
      <path d="M398 190 424 196 515 520 610 838 592 845 535 660 480 480Z" fill="url(#rod)" />

      <path d="M183 262Q140 300 145 345L235 660 285 840 333 1010Q345 1050 405 1055 490 1058 555 1027 640 975 632 910 625 872 604 848L515 520 447 285Q440 262 415 262L300 250Z" fill="#303030" />
      <path d="M285 840Q395 895 505 835L420 545 480 480 602 850Q615 890 560 950 520 985 440 1052L405 1055Q345 1050 333 1010Z" fill="url(#drum)" />
      <path d="M604 848Q640 890 630 930 600 985 520 1010L400 1012Q560 1000 600 925 612 890 604 848Z" fill="#2a2a2a" />
      <path d="M604 848Q625 870 618 900 600 935 560 950 612 910 604 848Z" fill="#4c4c4c" />
      <path d="M375 1010Q440 1006 482 995" fill="none" stroke="#777" strokeWidth="2" strokeDasharray="2 6" />

      <path d="M183 262Q140 300 145 345L235 660 285 840Q395 895 505 835L415 550 358 345 240 272Z" fill="url(#front)" />
      <path d="M285 838Q320 870 375 872 450 870 505 834" fill="none" stroke="#858585" strokeWidth="6" />
      <path d="M183 262Q140 300 145 345L192 510 190 300Z" fill="#5c5c5c" />
      <path d="M183 262 240 275 340 325Q372 350 364 385 330 360 262 385L258 350 190 320Z" fill="#646464" />
      <path d="M262 385Q310 350 358 362 330 340 280 352L258 360Z" fill="#848484" />
      <ellipse cx="282" cy="374" rx="20" ry="8" fill="#b4b4b4" opacity=".7" />
      <path d="M418 268Q440 262 447 285L515 520 480 535 478 480 430 285Z" fill="#3a3a3a" />

      <path d="M190 262Q215 228 245 223L372 235Q412 248 420 275 418 318 358 345L340 325 240 275Z" fill="#76f7a8" />
      <path d="M420 272 432 290 480 478Q470 530 415 550L358 345Q418 320 420 272Z" fill="url(#greenSide)" />
      <path d="M415 550Q470 530 481 478L484 486Q476 538 420 556Z" fill="#777" />
      <path d="M334 328Q330 304 357 304 382 304 382 318 360 306 342 318 338 324 340 334Z" fill="#2f8458" />
      <ellipse cx="358" cy="322" rx="7" ry="5" fill="#2f8458" />
      <path d="M205 258Q205 238 228 236 246 238 246 248 225 240 212 252Z" fill="#2f8458" />
      <ellipse cx="226" cy="254" rx="7" ry="4" fill="#2f8458" />

      {/* slot */}
      <path d="M192 330 275 350 290 640 200 610Z" fill="#5e5e5e" />
      <path d="M204 342 256 356 262 470 284 590 250 600 215 580Z" fill="#2b2b2e" />
      <path d="M244 385 258 388 264 460 250 470Z" fill="#3c8a64" />
      <path d="M215 590Q240 560 285 600L290 650 220 630Z" fill="#6c6c6c" />
      <path d="M247 655 300 650 310 690 250 690Z" fill="#3a3a3a" />

      {/* pocket on the side of the drum */}
      <path d="M235 660 338 655 373 830 270 775Z" fill="#3d3d3d" />
      <path d="M270 775 373 830Q350 850 315 848 280 826 270 775Z" fill="#848484" />
      <path d="M270 740Q290 700 320 735 340 770 334 790 300 790 285 765Z" fill="#585858" />
      <path d="M284 745Q300 720 322 752 338 780 332 790 300 785 284 745Z" fill="#7c7c7c" />
      <path d="M300 742Q316 745 330 775" fill="none" stroke="#c4c4c4" strokeWidth="5" />
      <path d="M275 660Q300 670 312 735" fill="none" stroke="#5a5a5a" strokeWidth="4" />

      {/* tool paths */}
      <g fill="none" strokeWidth="4">
        <path d="M205 340 258 350M205 340 199 520 210 590 225 615 278 630 281 515" stroke="#e02020" />
        <path d="M238 350 242 480 247 560Q252 592 285 600" stroke="#6cff20" strokeWidth="8" />
        <path d="M182 265 280 295V330L182 300ZM182 282 280 315M182 265 193 500M193 500H178L182 605M215 585Q225 620 272 624M285 580 292 655" stroke="#74f028" />
        <path d="M200 262 204 480 213 668M228 275 234 480 243 682M257 290 262 480 272 690" stroke="#6496ea" />
      </g>

      {/* cutting tool */}
      <path d="M50 598 100 566 118 614 60 623Q48 615 50 598Z" fill="url(#redTool)" />
      <path d="M98 560 118 543 134 546 175 550 180 574 152 590 138 618 118 620 105 600Z" fill="url(#redTool)" />
      <ellipse cx="120" cy="584" rx="15" ry="34" transform="rotate(-14 120 584)" fill="#b42028" />
      <path d="M168 546 188 540 194 570 176 574Z" fill="#d4d4dc" />
      <ellipse cx="198" cy="548" rx="24" ry="27" fill="#8c8c8c" />
      <ellipse cx="209" cy="547" rx="19" ry="27" fill="#c2c0c4" />

      {/* clamp */}
      <path d="M330 208 520 46 533 98 345 250 275 293 240 272 305 210Z" fill="#43438a" />
      <path d="M304 212 330 207 343 250 318 262Z" fill="#5656ae" />
      <path d="M270 182 462 27 482 38 484 60 497 55 508 43 520 48 332 208 305 212Q290 235 275 282L240 270 255 208 270 198Z" fill="#8686fa" />
      <path d="M482 38 483 68 400 132 365 165Q335 190 312 180 302 172 330 152L400 98Z" fill="#42428a" />
      <path d="M508 43 370 162Q340 186 316 184L332 180Q380 168 420 130L484 72Z" fill="#8686fa" />
      <path d="M376 122 398 132 388 142 374 138Z" fill="#b0602c" />
      <path d="M360 92 366 84H392L400 100 396 122 380 130 364 122Z" fill="#d8d8d8" />
      <path d="M364 106 384 112 396 104V122L380 130 364 122Z" fill="#a4a4a4" />
      <path d="M360 76 384 74 387 102Q378 108 368 103Z" fill="url(#rod)" />
      <ellipse cx="372" cy="74" rx="12" ry="8" fill="#d8743c" />
    </g>

    {/* axis marker */}
    <g fill="none" strokeWidth="1">
      <path d="M173.500 544V533M172 527H175L172 531H175" stroke="#1414e0" />
      <path d="M173 544 167 540M162 537 165 541M165 537 162 541" stroke="#7c1028" />
      <path d="M173 544 166 547M160 546 161.500 548 163 546M161.500 548V551" stroke="#4cd84c" />
    </g>
  </Scene>
);

const Dropdown = ({ label, value, w, bg }: { label: string; value: string; w: number; bg?: string }) => (
  <Combo $w={w} $bg={bg}>
    <select aria-label={label} defaultValue={value}>
      <option>{value}</option>
    </select>
    <ComboArrow><Caret /></ComboArrow>
  </Combo>
);

export default function App() {
  return (
    <>
      <GlobalStyle />
      <Window>
        <TitleBar>
          <Icon name="logo" size={8} />
          <Title>{'Mastercam Fresa X4 MU1  \\\\DB2SERVER\\F\\COPIA SEGURIDAD ORDENADOR PLANOS\\PERCOSUB_SERIE_2000\\MASTERCAM\\CAMPANA_UCAB\\MECANIZADO VENTANAS\\CUARTO_ PROCESO_CAMPANA UCAB.MCX'}</Title>
          <WinButton aria-label="Minimizar"><Svg $size={6} viewBox="0 0 6 6"><path d="M1 4H4V5H1Z" /></Svg></WinButton>
          <WinButton aria-label="Restaurar"><Svg $size={6} viewBox="0 0 6 6"><path d="M2 1H5V4M1 2.500H4V5H1Z" fill="none" stroke="#000" strokeWidth=".8" /></Svg></WinButton>
          <WinButton aria-label="Cerrar"><Svg $size={6} viewBox="0 0 6 6"><path d="M1 1 5 5M5 1 1 5" stroke="#000" /></Svg></WinButton>
        </TitleBar>

        <MenuBar>
          {['Fichero', 'Modificar', 'Ver', 'Analizar', 'Crear', 'Solidos', 'Editar', 'Maquina Tipo', 'Mecanizados', 'Pantalla', 'Modos', 'Ayuda'].map((m) => (
            <MenuItem key={m}>{m}</MenuItem>
          ))}
        </MenuBar>

        <ToolRow><ToolGroup><Tools spec={fileTools} active="column" /></ToolGroup></ToolRow>
        <ToolRow><ToolGroup><Tools spec={sketchTools} /></ToolGroup></ToolRow>

        <Ribbon>
          <RibbonBody>
            {[['X', '652.55714'], ['Y', '563.25501'], ['Z', '-132.6129']].map(([axis, value]) => (
              <AxisField key={axis}>
                <AxisButton>{axis}</AxisButton>
                <Combo $w={37} $tight>
                  <Numeric aria-label={axis} defaultValue={value} />
                  <ComboArrow><Caret /></ComboArrow>
                </Combo>
              </AxisField>
            ))}
            <Flat><Tools spec="flash bang block v help" /></Flat>
            <Grip />
            <Space $w={3} />
            <PushButton $w={24} $dim>Todo</PushButton>
            <PushButton $w={25}>Solo</PushButton>
            <IconButton aria-label="Seleccionar"><Icon name="hand" /></IconButton>
            <Space $w={3} />
            <Dropdown label="Modo de selección" value="Int." w={37} />
            <Space $w={5} />
            <Flat><Tools spec="pointer v" /></Flat>
            <Space $w={1} />
            <IconButton aria-label="Puntero"><Icon name="pointer" /></IconButton>
            <IconButton aria-label="Punto"><Icon name="dot" /></IconButton>
            <Space $w={3} />
            {[1, 2, 3].map((n) => <IconButton key={n} aria-label={`Filtro ${n}`}><Icon name="dot" /></IconButton>)}
            <Space $w={3} />
            <IconButton aria-label="Arcos"><Icon name="arcs" /></IconButton>
            <IconButton aria-label="Curvas"><Icon name="hill" /></IconButton>
            <Space $w={3} />
            <IconButton aria-label="Validar"><Icon name="check" /></IconButton>
            <Space $w={4} />
            <IconButton aria-label="Anular"><Icon name="forbid" /></IconButton>
            <IconButton aria-label="Fin"><Icon name="dot" /></IconButton>
            <Space $w={4} />
            <IconButton aria-label="Ayuda"><Icon name="help" /></IconButton>
          </RibbonBody>
          <ToolGroup><Tools spec="hammer" /></ToolGroup>
        </Ribbon>

        <Work>
          <Manager>
            <ManagerLabel>Gestor Operaciones</ManagerLabel>
            <ManagerLabel>Mecanizados</ManagerLabel>
            <ManagerTools><Tools spec="tickAdd tickDel" /></ManagerTools>
            <ManagerTools><Tools spec="lock waves" /></ManagerTools>
            <TreeBox>
              <TreeList>
                <li><Row $level={0}><TreeToggle open /><Icon name="machine" size={9} />CME</Row></li>
                <li><Row $level={1}><TreeToggle /><Icon name="props" size={9} />Propiedades - CME</Row></li>
                <li>
                  <Row $level={1}><TreeToggle open /><Icon name="group" size={9} />Grupo de operaciones-1</Row>
                  <Branch>
                    {operations.map((o) => (
                      <li key={o}><Row $level={2}><TreeToggle /><Icon name="op" size={9} />{o}</Row></li>
                    ))}
                    <li><Cursor><Icon name="insert" size={8} /><Selection /></Cursor></li>
                  </Branch>
                </li>
                <li>
                  <Row $level={1}><TreeToggle open /><Icon name="group" size={9} />Grupo de operaciones-2</Row>
                  <Branch>
                    <li><Row $level={2}><TreeToggle /><Icon name="opEmpty" size={9} />{`25 - Cajera (Obtener) - ${P} -`}</Row></li>
                  </Branch>
                </li>
              </TreeList>
              <ScrollBar>
                <ScrollButton aria-label="Izquierda"><Svg $size={4} viewBox="0 0 4 4"><path d="M3 0V4L1 2Z" /></Svg></ScrollButton>
                <Thumb />
                <ScrollButton aria-label="Derecha"><Svg $size={4} viewBox="0 0 4 4"><path d="M1 0V4L3 2Z" /></Svg></ScrollButton>
              </ScrollBar>
            </TreeBox>
          </Manager>

          <Stage>
            <StageTop />
            <PlayBar>
              {['play', 'stop', 'first', 'back', 'next', 'last'].map((n) => (
                <IconButton key={n} aria-label={n} $w={n === 'stop' || n === 'next' ? 13 : 12}><Icon name={n} size={9} /></IconButton>
              ))}
              <Space $w={4} />
              <IconButton aria-label="Trayectoria"><Icon name="trace" /></IconButton>
              <IconButton aria-label="Herramienta" $pressed><Icon name="traceRed" /></IconButton>
              <Speed type="range" aria-label="Velocidad" defaultValue={45} />
              <Timeline>
                {segments.map(([grow, color], i) => <Segment key={i} $grow={grow} $color={color} />)}
                <Playhead />
              </Timeline>
              <Space $w={6} />
              <IconButton aria-label="Paradas"><Icon name="stopSign" /></IconButton>
              <IconButton aria-label="Ayuda"><Icon name="helpKey" /></IconButton>
            </PlayBar>
            <Viewport>
              <Model />
              <ViewText><span>Vista:No grabado</span><span>WCS:PLANTA</span><span>Plano C/H:ATRAS</span></ViewText>
              <Scale><ScaleValue>134.056</ScaleValue>Milímetros</Scale>
            </Viewport>
          </Stage>

          <SideBar>
            <SideGrip />
            {['pan', 'palette', 'pencil', 'sphere', 'folder', 'globe', 'disk'].map((n) => (
              <ToolButton key={n} aria-label={n}><Icon name={n} size={9} /></ToolButton>
            ))}
          </SideBar>

          <Dialog aria-label="Simular">
            <DialogTitle>
              <Icon name="logo" size={8} />
              <DialogName>Simular</DialogName>
              <WinButton aria-label="Cerrar"><Svg $size={6} viewBox="0 0 6 6"><path d="M1 1 5 5M5 1 1 5" stroke="#000" /></Svg></WinButton>
            </DialogTitle>
            <DialogRow $top={0}><IconButton aria-label="Contraer" $w={11} $h={12}><Icon name="chevrons" /></IconButton></DialogRow>
            <DialogRow $top={5}>
              {['rotate', 'tool', 'holder', 'key', 'probe', 'bucket'].map((n) => (
                <IconButton key={n} aria-label={n} $w={13} $h={14} $pressed={n === 'tool' || n === 'holder'}><Icon name={n} /></IconButton>
              ))}
              <Space $w={9} />
              <IconButton aria-label="Opciones" $w={13} $h={14}><Icon name="screw" /></IconButton>
            </DialogRow>
            <DialogRow $top={4} $end>
              {['slash2', 'slash3', 'camera', 'diskGreen'].map((n) => (
                <IconButton key={n} aria-label={n} $w={13} $h={14}><Icon name={n} /></IconButton>
              ))}
            </DialogRow>
            <Rule />
            <DialogRow $top={4} $end>
              <IconButton aria-label="Aceptar" $w={29} $h={16}><Icon name="tick" size={12} /></IconButton>
              <IconButton aria-label="Ayuda" $w={29} $h={16}><Icon name="help" size={12} /></IconButton>
            </DialogRow>
          </Dialog>
        </Work>

        <StatusBar>
          <Hint>Para ayuda, pulsar Alt+H.</Hint>
          <StatusButton $w={12}>3D</StatusButton>
          <StatusButton $w={14}>Vista</StatusButton>
          <StatusButton $w={20}>Planos</StatusButton>
          <Pane>
            Z:
            <Combo $w={38} $bg="#ffff80"><input aria-label="Z" defaultValue="-132.613" /><ComboArrow><Caret /></ComboArrow></Combo>
            <ColorBox>10</ColorBox>
            <Caret size={5} />
          </Pane>
          <Pane>
            Nivel:
            <Dropdown label="Nivel" value="1 : SERIE CAB" w={46} bg="#fff" />
          </Pane>
          <StatusButton $w={26}>Atributos</StatusButton>
          <Dropdown label="Estilo de punto" value="+" w={16} bg="#fff" />
          <LineCombo $w={32} $bg="#fff">
            <select aria-label="Estilo de línea"><option></option></select>
            <LineSample $h={2} /><ComboArrow><Caret /></ComboArrow>
          </LineCombo>
          <LineCombo $w={34} $bg="#fff">
            <select aria-label="Grosor de línea"><option></option></select>
            <LineSample $h={1} /><ComboArrow><Caret /></ComboArrow>
          </LineCombo>
          <StatusButton $w={20}>WCS</StatusButton>
          <StatusButton $w={21}>Grupos</StatusButton>
          <StatusButton $w={6}>!</StatusButton>
          <StatusButton $w={6}>?</StatusButton>
        </StatusBar>
      </Window>
    </>
  );
}
